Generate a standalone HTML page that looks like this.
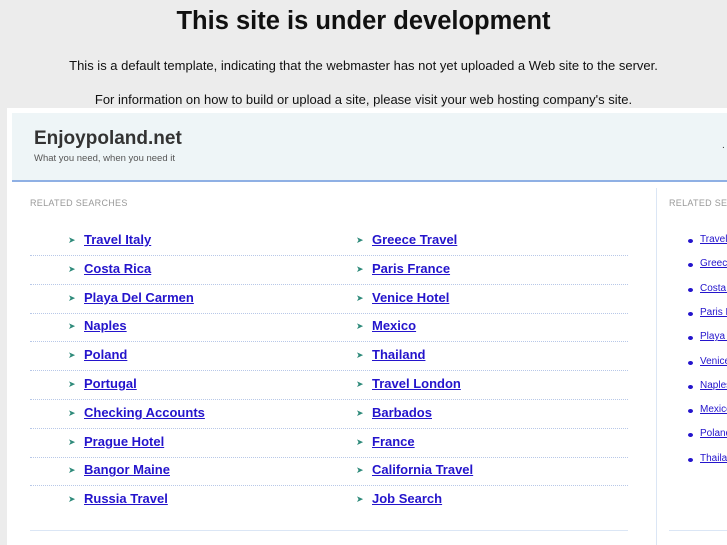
<!DOCTYPE html>
<html style="overflow:hidden"><head><style>
body{margin:0;width:727px;height:545px;overflow:hidden;background:#ececec;font-family:"Liberation Sans",sans-serif;position:relative}
.a{position:absolute;white-space:nowrap}
h1{position:absolute;top:7px;left:0;width:727px;text-align:center;margin:0;font-size:25.5px;font-weight:bold;color:#111}
.p{left:0;width:727px;text-align:center;font-size:13px;color:#111}
#frame{position:absolute;left:7px;top:108px;width:720px;height:437px;background:#fff}
#hdr{position:absolute;left:12px;top:113px;width:715px;height:67px;background:#eef5f7;border-bottom:2px solid #8fb0e4}
.l{font-size:13px;font-weight:bold;color:#2414cc;text-decoration:underline}
.ar{color:#2e8a7a;font-size:9px}
.dot{position:absolute;left:30px;width:598px;border-top:1px dotted #b8c8e8;height:0}
.r{font-size:10px;color:#2414cc;text-decoration:underline}
.b{position:absolute;left:8px;width:5px;height:4px;border-radius:50%;background:#2414cc}
#side{position:absolute;left:680px;top:188px;width:47px;height:357px;overflow:hidden}
</style></head><body>
<h1>This site is under development</h1>
<div class="a p" style="top:58px">This is a default template, indicating that the webmaster has not yet uploaded a Web site to the server.</div>
<div class="a p" style="top:92px">For information on how to build or upload a site, please visit your web hosting company's site.</div>
<div id="frame"></div>
<div id="hdr"></div>
<div class="a" style="left:34px;top:128px;font-size:19px;font-weight:bold;color:#333">Enjoypoland.net</div>
<div class="a" style="left:34px;top:153px;font-size:9.5px;color:#555">What you need, when you need it</div>
<div class="a" style="left:722px;top:140px;font-size:10px;color:#333">.</div>
<div class="a" style="left:30px;top:198px;font-size:9px;color:#999;letter-spacing:.3px">RELATED SEARCHES</div>
<div style="position:absolute;left:669px;top:198px;width:58px;overflow:hidden;font-size:9px;color:#999;letter-spacing:.3px;white-space:nowrap">RELATED SEARCHES</div>
<div style="position:absolute;left:656px;top:188px;width:1px;height:357px;background:#dbe6f5"></div>
<div style="position:absolute;left:30px;top:530px;width:598px;height:1px;background:#dbe6f5"></div>
<div style="position:absolute;left:669px;top:530px;width:58px;height:1px;background:#dbe6f5"></div>
<div id="rows"></div>
<div id="side"></div>
<script>
var L=["Travel Italy","Costa Rica","Playa Del Carmen","Naples","Poland","Portugal","Checking Accounts","Prague Hotel","Bangor Maine","Russia Travel"];
var R=["Greece Travel","Paris France","Venice Hotel","Mexico","Thailand","Travel London","Barbados","France","California Travel","Job Search"];
var S=["Travel Italy","Greece Travel","Costa Rica","Paris France","Playa Del Carmen","Venice Hotel","Naples","Mexico","Poland","Thailand"];
var h="",s="";
for(var i=0;i<10;i++){var y=232+i*28.8;
h+='<div class="a ar" style="left:68px;top:'+(y+3)+'px">&#10148;</div><div class="a l" style="left:84px;top:'+y+'px">'+L[i]+'</div>';
h+='<div class="a ar" style="left:356px;top:'+(y+3)+'px">&#10148;</div><div class="a l" style="left:372px;top:'+y+'px">'+R[i]+'</div>';
if(i<9)h+='<div class="dot" style="top:'+(y+23)+'px"></div>';
var z=46+i*24.3;
s+='<div class="b" style="top:'+(z+5)+'px"></div><div class="a r" style="left:20px;top:'+z+'px">'+S[i]+'</div>';}
document.getElementById("rows").innerHTML=h;
document.getElementById("side").innerHTML=s;
</script>
</body></html>
